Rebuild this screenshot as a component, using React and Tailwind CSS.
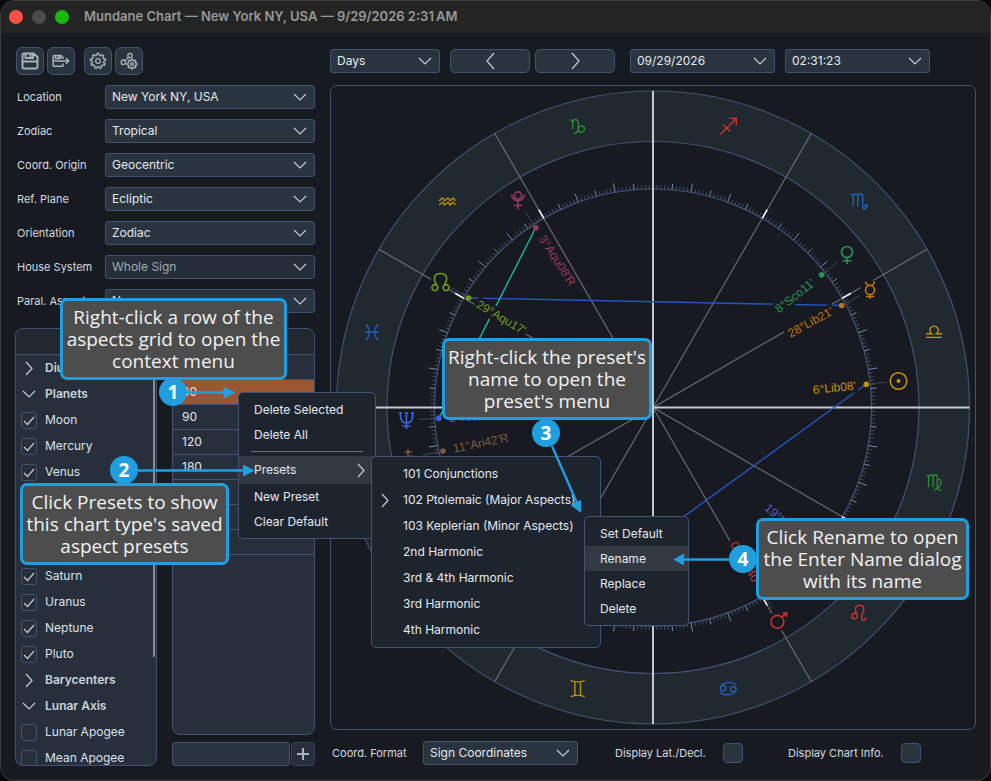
import React from "react";

const C = { x: 653, y: 407.5 };
const R_OUT = 316.5;
const R_MID = 266;
const R_IN = 218.5;

function polar(r, deg) {
  const a = (deg * Math.PI) / 180;
  return [C.x + r * Math.cos(a), C.y - r * Math.sin(a)];
}

function Chevron({ className = "", dir = "down" }) {
  const d =
    dir === "down" ? "M1 1 L7 7 L13 1" : dir === "right" ? "M1 1 L7 7.5 L1 14" : "M8 1 L1 9 L8 17";
  const box = dir === "down" ? [14, 8] : dir === "right" ? [8, 15] : [9, 18];
  return (
    <svg width={box[0]} height={box[1]} viewBox={`0 0 ${box[0]} ${box[1]}`} fill="none" stroke="#c3cad1" strokeWidth="1.2" className={className} aria-hidden="true">
      <path d={d} />
    </svg>
  );
}

function Dropdown({ id, label, value, className = "", muted = false }) {
  return (
    <div className={`relative h-6 ${className}`}>
      <select
        id={id}
        aria-label={label}
        className={`block h-6 w-full appearance-none rounded-[3px] border border-[#435173] pl-1.5 pr-8 text-[12px] outline-none ${muted ? "bg-[#252d38] text-[#a3abb2]" : "bg-[#29343f] text-[#e4e9ed]"}`}
      >
        <option>{value}</option>
      </select>
      <Chevron className="pointer-events-none absolute right-2 top-2" />
    </div>
  );
}

const SETTINGS = [
  ["Location", "New York NY, USA"],
  ["Zodiac", "Tropical"],
  ["Coord. Origin", "Geocentric"],
  ["Ref. Plane", "Ecliptic"],
  ["Orientation", "Zodiac"],
  ["House System", "Whole Sign", true],
  ["Paral. Aspects", "None"],
];

const BODIES = [
  { name: "Diurnal Arc", group: "closed" },
  { name: "Planets", group: "open" },
  { name: "Moon", on: true },
  { name: "Mercury", on: true },
  { name: "Venus", on: true },
  { name: "Earth", on: true },
  { name: "Mars", on: true },
  { name: "Jupiter", on: true },
  { name: "Saturn", on: true },
  { name: "Uranus", on: true },
  { name: "Neptune", on: true },
  { name: "Pluto", on: true },
  { name: "Barycenters", group: "closed" },
  { name: "Lunar Axis", group: "open" },
  { name: "Lunar Apogee", on: false },
  { name: "Mean Apogee", on: false },
];

const ASPECTS = ["0", "60", "90", "120", "180", "", "", ""];

function BodyRow({ item }) {
  if (item.group) {
    return (
      <button className="flex h-[26px] w-full shrink-0 items-center whitespace-nowrap text-left text-[12px] font-semibold text-[#cdd4da]">
        <span className="flex w-[29px] shrink-0 justify-center pr-1">
          {item.group === "open" ? <Chevron /> : <Chevron dir="right" />}
        </span>
        {item.name}
      </button>
    );
  }
  return (
    <label className="flex h-[26px] shrink-0 items-center gap-2 whitespace-nowrap pl-[5px] text-[12px] text-[#dbe1e6]">
      <span className="relative h-[17px] w-4">
        <input type="checkbox" defaultChecked={item.on} className="peer block h-[17px] w-4 appearance-none rounded-[3px] border border-[#435173] bg-[#262f3b]" />
        <svg viewBox="0 0 16 17" className="pointer-events-none absolute inset-0 hidden h-[17px] w-4 peer-checked:block" fill="none" stroke="#c3cad1" strokeWidth="1.2" aria-hidden="true">
          <path d="M3 9 L6.5 12.5 L13 5" />
        </svg>
      </span>
      {item.name}
    </label>
  );
}

function ToolButton({ label, children, className = "" }) {
  return (
    <button aria-label={label} className={`flex size-7 items-center justify-center rounded-[6px] border border-[#435173] bg-[#29343f] ${className}`}>
      {children}
    </button>
  );
}

function gearPath(cx, cy, r, inner, teeth) {
  const pts = [];
  for (let i = 0; i < teeth; i++) {
    const step = (2 * Math.PI) / teeth;
    [
      [-0.32, inner],
      [-0.2, r],
      [0.2, r],
      [0.32, inner],
    ].forEach(([o, rad]) => {
      const a = (i + o) * step - Math.PI / 2;
      pts.push(`${(cx + rad * Math.cos(a)).toFixed(2)} ${(cy + rad * Math.sin(a)).toFixed(2)}`);
    });
  }
  return `M${pts.join(" L")} Z`;
}

const SIGN_PATHS = {
  capricorn: "M-8 -6 Q-5 -7.5 -5 -3 V2.5 M-5 -3 Q-4.5 -7 -2 -7 Q.5 -6.5 .5 -3 V3 Q0 7 -4 7 M.5 3 A3.2 3.2 0 1 0 3 -.5 Q.8 0 .5 3",
  aquarius:
    "M-8 -.8 L-5.5 -3.5 Q-4.2 -4 -3.6 -2.2 Q-3 -.4 -2 -1.5 L0 -3.5 Q1.3 -4 2 -2.2 Q2.6 -.4 3.5 -1.5 L5.3 -3.5 Q7 -4 7.8 -.8 M-8 3.4 L-5.5 .8 Q-4.2 .2 -3.6 2 Q-3 3.8 -2 2.8 L0 .8 Q1.3 .2 2 2 Q2.6 3.8 3.5 2.8 L5.3 .8 Q7 .2 7.8 3.4",
  pisces: "M-6 -8 Q1 0 -6 8 M6 -8 Q-1 0 6 8 M-6.5 0 H6.5",
  sagittarius: "M-8 8 L8 -8 M1 -8 H8 V-1 M-5.5 -2 L2 5",
  scorpio: "M-8 -7 Q-6 -8 -5.5 -5 V4.5 M-5.5 -5 Q-5 -8 -3 -8 Q-1 -8 -1 -5 V4.5 M-1 -5 Q-.5 -8 1.5 -8 Q4 -8 4 -5 V5 Q4.5 9 7.5 6 V3 M5.5 4.8 L7.6 2.6 L9 4.8",
  libra: "M-8 1.5 H-2.5 A4.2 4.2 0 1 1 2.5 1.5 H8 M-8 5.2 H8",
  virgo: "M-7.5 -7 Q-6 -8 -5.5 -5 V4.5 M-5.5 -5 Q-5 -8 -3 -8 Q-1 -8 -1 -5 V4.5 M-1 -5 Q-.5 -8 1.2 -8 Q3.2 -8 3.2 -5 V4 Q3.5 7 7 7.5 M3.2 -2.5 Q7 -5 7 -1 Q7 4 0 7.5",
  leo: "M-1.8 1 C-4 -2 -4.5 -8 1 -8 C6 -8 5.5 -3 4 0 C2.5 3 2 7 4.7 7 Q7 7 7 4.2 M-1.4 2.8 A2.8 2.8 0 1 1 -7 2.8 A2.8 2.8 0 1 1 -1.4 2.8",
  cancer: "M-7.6 -1 C-6 -7 4 -7.5 8 -3.8 M7.6 1 C6 7 -4 7.5 -8 3.8 M-2.4 -.4 A2.7 2.7 0 1 1 -7.8 -.4 A2.7 2.7 0 1 1 -2.4 -.4 M7.8 .6 A2.7 2.7 0 1 1 2.4 .6 A2.7 2.7 0 1 1 7.8 .6",
  gemini: "M-7 -8 Q0 -5.5 7 -8 M-7 8 Q0 5.5 7 8 M-2.8 -6.8 V6.8 M2.8 -6.8 V6.8",
};

const SIGNS = [
  ["libra", 15, "#bd920f"],
  ["scorpio", 45, "#1f60b8"],
  ["sagittarius", 75, "#d0322d"],
  ["capricorn", 105, "#2c8a31"],
  ["aquarius", 135, "#bd920f"],
  ["pisces", 165, "#1f60b8"],
  ["gemini", 255, "#bd920f"],
  ["cancer", 285, "#1f60b8"],
  ["leo", 315, "#d0322d"],
  ["virgo", 345, "#2c8a31"],
];

const PLANETS = [
  { deg: 6.2, color: "#c2920f", text: "6°Lib08'", w: 45, at: [898.5, 381], d: "M8.3 0 A8.3 8.3 0 1 1 -8.3 0 A8.3 8.3 0 1 1 8.3 0", dot: true },
  { deg: 28.4, color: "#c1740f", text: "28°Lib21'", w: 51, at: [870, 290], d: "M-4.3 -8.5 Q-4 -4.5 0 -4.5 Q4 -4.5 4.3 -8.5 M4.5 0 A4.5 4.5 0 1 1 -4.5 0 A4.5 4.5 0 1 1 4.5 0 M0 4.5 V9 M-4 6.5 H4" },
  { deg: 38.2, color: "#259455", text: "8°Sco11'", w: 47, at: [847, 255], d: "M5.5 -3 A5.5 5.5 0 1 1 -5.5 -3 A5.5 5.5 0 1 1 5.5 -3 M0 2.5 V9 M-4.3 5.8 H4.3" },
  { deg: 123.1, color: "#96385f", text: "3°Aqu08'R", w: 57, at: [518, 200.5], d: "M3.6 -5 A3.6 3.6 0 1 1 -3.6 -5 A3.6 3.6 0 1 1 3.6 -5 M-6.3 -6 A6.3 6.3 0 0 0 6.3 -6 M0 1 V9 M-4.3 5 H4.3" },
  { deg: 149.3, color: "#6f9a1d", text: "29°Aqu17'", w: 55, at: [440.5, 282], d: "M-3.4 3.6 C-8 -3 -6.5 -8.5 0 -8.5 C6.5 -8.5 8 -3 3.4 3.6 M-2.6 5.6 A3 3 0 1 1 -8.6 5.6 A3 3 0 1 1 -2.6 5.6 M8.6 5.6 A3 3 0 1 1 2.6 5.6 A3 3 0 1 1 8.6 5.6" },
  { deg: 182.9, color: "#3c63e0", text: "2°Ari54'R", w: 50, at: [406.5, 420], d: "M-6 -8 V-4 Q-6 3 0 3 Q6 3 6 -4 V-8 M0 -8 V9 M-4 6 H4 M-7.5 -7 H-4.5 M4.5 -7 H7.5 M-1.5 -7 H1.5" },
  { deg: 191.7, color: "#7a5a45", text: "11°Ari42'R", w: 57, at: [409, 458], d: "M-1 -9 V6 M-4 -6 H3 M-1 0 Q3 -4 5 0 Q5 4 2 8" },
  { deg: 300.7, color: "#c7322f", text: "0°Leo40'", w: 48, at: [778, 621], d: "M5.8 .8 A6.4 6.4 0 1 1 -7 .8 A6.4 6.4 0 1 1 5.8 .8 M3.8 -3.8 L8.5 -8 M4.5 -7.5 L8.8 -8.3 L8.2 -4.2" },
  { deg: 319, color: "#6d52c4", text: "19°Leo23'", w: 54, at: [839, 569], d: "M-5 -7 Q0 -6 0 -1 Q-1 3 -6 3 H6 M3 -3 V8" },
];

function Wheel() {
  const ticks = [];
  for (let i = 0; i < 360; i++) {
    if (i % 30 === 0) continue;
    const len = i % 10 === 0 ? 9 : i % 5 === 0 ? 6 : 4;
    const [x1, y1] = polar(R_IN, i);
    const [x2, y2] = polar(R_IN + len, i);
    ticks.push(<line key={i} x1={x1} y1={y1} x2={x2} y2={y2} stroke={i % 5 === 0 ? "#7787ab" : "#414f6c"} strokeWidth="1" />);
  }
  const spokes = [30, 60, 120, 150, 210, 240, 300, 330];
  return (
    <svg viewBox="331 86 644 643" className="block w-full" role="img" aria-label="Astrological chart wheel">
      <circle cx={C.x} cy={C.y} r={(R_OUT + R_MID) / 2} fill="none" stroke="#202830" strokeWidth={R_OUT - R_MID} />
      {[R_OUT, R_MID, R_IN].map((r) => (
        <circle key={r} cx={C.x} cy={C.y} r={r} fill="none" stroke="#435173" strokeWidth="1.2" />
      ))}
      {ticks}
      {spokes.map((d) => {
        const [x, y] = polar(R_OUT, d);
        const [a, b] = polar(R_IN, d);
        const [e, f] = polar(R_IN + 10, d);
        return (
          <g key={d}>
            <line x1={C.x} y1={C.y} x2={x} y2={y} stroke="#6c717b" strokeWidth="1.1" />
            <line x1={a} y1={b} x2={e} y2={f} stroke="#f1f3f5" strokeWidth="1.6" />
          </g>
        );
      })}
      <g stroke="#c3c9cf" strokeWidth="2">
        <line x1={C.x} y1={C.y - R_OUT} x2={C.x} y2={C.y + R_OUT} />
        <line x1={C.x - R_OUT} y1={C.y} x2={C.x + R_OUT} y2={C.y} />
      </g>
      <g strokeWidth="1.4">
        <line x1="468" y1="298" x2="841.5" y2="305.5" stroke="#2454c6" />
        <line x1="866" y1="384.3" x2="566" y2="602" stroke="#2454c6" />
        <line x1="535.6" y1="228" x2="439" y2="418" stroke="#20b3a2" />
      </g>
      {SIGNS.map(([name, deg, color]) => {
        const [x, y] = polar(291, deg);
        return <path key={name} d={SIGN_PATHS[name]} transform={`translate(${x} ${y})`} fill="none" stroke={color} strokeWidth="1.4" />;
      })}
      {PLANETS.map((p) => {
        const left = p.deg > 90 && p.deg < 270;
        const [dx, dy] = polar(214.5, p.deg);
        const [tx, ty] = polar(204, p.deg);
        const [lx, ly] = polar(R_IN, p.deg);
        const [mx, my] = polar(235, p.deg);
        const rot = left ? 180 - p.deg : -p.deg;
        return (
          <g key={p.text}>
            <line x1={lx} y1={ly} x2={mx} y2={my} stroke="#3a465c" />
            <circle cx={p.at[0]} cy={p.at[1]} r="10" fill="#181a21" />
            <circle cx={dx} cy={dy} r="2.8" fill={p.color} />
            <g transform={`translate(${tx} ${ty}) rotate(${rot})`}>
              <rect x={left ? -2 : -p.w - 2} y="-7" width={p.w + 4} height="14" fill="#181a21" />
              <text y="4" textAnchor={left ? "start" : "end"} fill={p.color} className="font-['Liberation_Sans',sans-serif] text-[12px]">
                {p.text}
              </text>
            </g>
            <path d={p.d} transform={`translate(${p.at[0]} ${p.at[1]})`} fill="none" stroke={p.color} strokeWidth="1.6" />
            {p.dot && <circle cx={p.at[0]} cy={p.at[1]} r="2" fill={p.color} />}
          </g>
        );
      })}
    </svg>
  );
}

function Menu({ label, className, children }) {
  return (
    <div role="menu" aria-label={label} className={`absolute flex flex-col rounded-[5px] border border-[#435173] bg-[#1e242d] text-[12px] text-[#e4e9ed] ${className}`}>
      {children}
    </div>
  );
}

function MenuItem({ className, active = false, children }) {
  return (
    <button role="menuitem" className={`relative flex w-full items-center whitespace-nowrap text-left ${active ? "bg-[#333942]" : ""} ${className}`}>
      {children}
    </button>
  );
}

function Callout({ className, lines }) {
  return (
    <div className={`absolute flex h-[82px] flex-col items-center justify-center rounded-[7px] border-[3px] border-[#1f9fe0] bg-[#4d4d4d] text-center font-['Open_Sans','Noto_Sans',sans-serif] text-[19px] leading-[22px] text-[#f2f2f2] ${className}`}>
      {lines.map((l) => (
        <span key={l} className="whitespace-nowrap">
          {l}
        </span>
      ))}
    </div>
  );
}

function Badge({ className, n }) {
  return (
    <span className={`absolute flex size-7 items-center justify-center rounded-full bg-[#1f9fe0] font-['Open_Sans','Noto_Sans',sans-serif] text-[19px] font-bold text-white ${className}`}>
      {n}
    </span>
  );
}

function Annotations() {
  return (
    <>
      <svg viewBox="0 0 991 781" className="pointer-events-none absolute left-0 top-0 h-[781px] w-[991px]" fill="#1f9fe0" stroke="none" aria-hidden="true">
        <g stroke="#1f9fe0" strokeWidth="2.4">
          <path d="M186 392.5 H226 M138 470.5 H246 M552 446 L577.5 504 M729 559.5 H682" />
        </g>
        <path d="M223.5 386.5 L235.5 392.5 L223.5 398.5 Z M243 464.5 L255 470.5 L243 476.5 Z M673.5 559.5 L684 553.5 V565.5 Z M570.5 505 L581 513 L581 500 Z" />
      </svg>
      <Callout className="left-[60px] top-[298px] w-[227px]" lines={["Right-click a row of the", "aspects grid to open the", "context menu"]} />
      <Callout className="left-[20px] top-[483px] w-[209px]" lines={["Click Presets to show", "this chart type's saved", "aspect presets"]} />
      <Callout className="left-[442px] top-[338px] w-[210px]" lines={["Right-click the preset's", "name to open the", "preset's menu"]} />
      <Callout className="left-[756px] top-[518px] w-[213px]" lines={["Click Rename to open", "the Enter Name dialog", "with its name"]} />
      <Badge className="left-[159px] top-[378px]" n="1" />
      <Badge className="left-[110px] top-[456px]" n="2" />
      <Badge className="left-[532px] top-[419px]" n="3" />
      <Badge className="left-[729px] top-[545px]" n="4" />
    </>
  );
}

const PRESETS = [
  "101 Conjunctions",
  "102 Ptolemaic (Major Aspects)",
  "103 Keplerian (Minor Aspects)",
  "2nd Harmonic",
  "3rd & 4th Harmonic",
  "3rd Harmonic",
  "4th Harmonic",
];

function Sidebar() {
  return (
    <aside className="flex w-[300px] shrink-0 flex-col">
      <div className="mb-2.5 flex gap-[3px] pl-px">
        <ToolButton label="Save">
          <svg width="18" height="18" viewBox="0 0 18 18" fill="none" stroke="#a9b3bb" strokeWidth="1.9" aria-hidden="true">
            <path d="M3 1.5 H12.5 L16.5 5 V15 Q16.5 16.5 15 16.5 H3 Q1.5 16.5 1.5 15 V3 Q1.5 1.5 3 1.5 Z M4.5 1.5 V6 H12 V1.5 M1.5 9.5 H16.5 M9.5 2.5 V5" />
          </svg>
        </ToolButton>
        <ToolButton label="Save as">
          <svg width="18" height="14" viewBox="0 0 18 14" fill="none" stroke="#a9b3bb" strokeWidth="1.5" aria-hidden="true">
            <path d="M11 5 V3.5 L9 1.5 H2 Q1.2 1.5 1.2 2.3 V11.5 Q1.2 12.3 2 12.3 H10.2 Q11 12.3 11 11.5 V9.5 M3.5 1.5 V4.5 H8.5 V1.5 M1.2 7 H16.5 M14 4.3 L16.7 7 L14 9.7 M6.5 2 V4" />
          </svg>
        </ToolButton>
        <ToolButton label="Settings" className="ml-1.5">
          <svg width="18" height="18" viewBox="0 0 18 18" fill="none" stroke="#a9b3bb" strokeWidth="1.3" strokeLinejoin="round" aria-hidden="true">
            <path d={gearPath(9, 9, 7.6, 5.8, 9)} />
            <circle cx="9" cy="9" r="2.3" />
          </svg>
        </ToolButton>
        <ToolButton label="Aspect settings">
          <svg width="18" height="18" viewBox="0 0 18 18" fill="none" stroke="#a9b3bb" strokeWidth="1.3" strokeLinejoin="round" aria-hidden="true">
            <circle cx="10" cy="3.5" r="2.2" />
            <circle cx="3.4" cy="10.2" r="2.2" />
            <path d="M5 8.6 L8.5 5.1" />
            <path d={gearPath(12, 12, 4.8, 3.7, 8)} />
            <circle cx="12" cy="12" r="1.4" />
          </svg>
        </ToolButton>
      </div>
      <div className="flex flex-col gap-2.5">
        {SETTINGS.map(([label, value, muted]) => (
          <div key={label} className="flex items-center">
            <label htmlFor={label} className="w-[90px] pl-0.5 text-[11px] text-[#d3dae0]">
              {label}
            </label>
            <Dropdown id={label} value={value} muted={muted} className="flex-1" />
          </div>
        ))}
      </div>
      <div className="mt-[15px] flex h-[438px] gap-[15px]">
        <div className="flex w-[142px] shrink-0 flex-col overflow-hidden rounded-[8px] border border-[#435173] bg-[#262f3b]">
          <div className="h-[26px] shrink-0 border-b border-[#435173] bg-[#212830]" />
          <div className="flex min-h-0 flex-1 overflow-hidden">
            <div className="min-w-0 flex-1">
              {BODIES.map((b) => (
                <BodyRow key={b.name} item={b} />
              ))}
            </div>
            <div className="mr-px h-[302px] w-0.5 rounded-full bg-[#8d8f8f]" />
          </div>
        </div>
        <div className="flex min-w-0 flex-1 flex-col gap-[7px]">
          <div className="flex-1 overflow-hidden rounded-[8px] border border-[#435173] bg-[#262f3b]">
            <table className="w-full border-collapse text-[12px] text-[#e4e9ed]">
              <thead>
                <tr className="h-[25px] border-b border-[#435173] bg-[#212830]">
                  <th aria-label="Angle" />
                </tr>
              </thead>
              <tbody>
                {ASPECTS.map((a, i) => (
                  <tr key={i} className={`h-[25px] border-b border-[#435173] ${a === "60" ? "bg-[#9a5531]" : ""}`}>
                    <td className="p-0 pl-[9px]">{a}</td>
                  </tr>
                ))}
              </tbody>
            </table>
          </div>
          <div className="flex h-6 gap-px">
            <input aria-label="New aspect" className="h-6 w-full min-w-0 flex-1 rounded-[3px] border border-[#435173] bg-[#29343f] px-2 text-[12px] text-white outline-none" />
            <button aria-label="Add aspect" className="flex size-6 shrink-0 items-center justify-center rounded-[4px] border border-[#37435d] bg-[#262f3b]">
              <svg width="12" height="12" viewBox="0 0 12 12" stroke="#a9b3bb" strokeWidth="2" aria-hidden="true">
                <path d="M6 0 V12 M0 6 H12" />
              </svg>
            </button>
          </div>
        </div>
      </div>
    </aside>
  );
}

function ChartArea() {
  const box = "size-5 appearance-none rounded-[4px] border border-[#435173] bg-[#29343f]";
  return (
    <main className="flex min-w-0 flex-1 flex-col pt-0.5">
      <div className="mb-3 flex h-6">
        <Dropdown label="Step unit" value="Days" className="w-[110px]" />
        <button aria-label="Previous" className="ml-2.5 flex h-6 w-20 items-center justify-center rounded-[5px] border border-[#435173] bg-[#29343f]">
          <Chevron dir="left" />
        </button>
        <button aria-label="Next" className="ml-[5px] flex h-6 w-20 items-center justify-center rounded-[5px] border border-[#435173] bg-[#29343f]">
          <span className="rotate-180">
            <Chevron dir="left" />
          </span>
        </button>
        <Dropdown label="Date" value="09/29/2026" className="ml-[15px] w-[145px]" />
        <Dropdown label="Time" value="02:31:23" className="ml-2.5 w-[145px]" />
      </div>
      <div className="rounded-[7px] border border-[#435173]">
        <Wheel />
      </div>
      <div className="mt-[11px] flex items-center pl-0.5 text-[11px] text-[#d3dae0]">
        <label htmlFor="format" className="w-[91px]">
          Coord. Format
        </label>
        <Dropdown id="format" value="Sign Coordinates" className="w-[155px]" />
        <label className="ml-[37px] flex w-32 items-center justify-between">
          Display Lat./Decl.
          <input type="checkbox" className={box} />
        </label>
        <label className="ml-[45px] flex w-[133px] items-center justify-between">
          Display Chart Info.
          <input type="checkbox" className={box} />
        </label>
      </div>
    </main>
  );
}

export default function App() {
  return (
    <div className="relative min-h-screen overflow-hidden bg-[#08090b] font-['Inter',sans-serif]">
      <div className="min-h-screen overflow-hidden rounded-[14px] border border-[#3c3d3f] bg-[#181a21]">
        <header className="flex h-8 items-center bg-[#242424] pl-2">
          <div className="flex gap-[9px]">
            <button aria-label="Close" className="size-3.5 rounded-full bg-[#fb4f48]" />
            <button aria-label="Minimize" className="size-3.5 rounded-full bg-[#4b4b4b]" />
            <button aria-label="Zoom" className="size-3.5 rounded-full bg-[#17b80f]" />
          </div>
          <h1 className="ml-[15px] text-[13px] font-semibold text-[#989898]">Mundane Chart — New York NY, USA — 9/29/2026 2:31{"\u2009"}AM</h1>
        </header>
        <div className="flex gap-[15px] pb-3.5 pl-3.5 pr-3.5 pt-3.5">
          <Sidebar />
          <ChartArea />
        </div>
      </div>

      <Menu label="Aspects grid menu" className="left-[238px] top-[392px] h-[147px] w-[138px] pt-1">
        <MenuItem className="h-[25px] pl-[15px]">Delete Selected</MenuItem>
        <MenuItem className="h-[25px] pl-[15px]">Delete All</MenuItem>
        <hr className="mb-1 ml-3 mr-3 mt-1 border-[#6b6f76]" />
        <MenuItem active className="h-7 pl-[15px]">
          Presets
          <Chevron dir="right" className="absolute right-2.5 top-[7px]" />
        </MenuItem>
        <MenuItem className="h-[25px] pl-[15px]">New Preset</MenuItem>
        <MenuItem className="h-[25px] pl-[15px]">Clear Default</MenuItem>
      </Menu>
      <Menu label="Presets" className="left-[371px] top-[456px] h-[192px] w-[230px] pt-1">
        {PRESETS.map((p, i) => (
          <MenuItem key={p} className="h-[26px] pl-[31px]">
            {i === 1 && <Chevron dir="right" className="absolute left-[9px] top-[6px]" />}
            {p}
          </MenuItem>
        ))}
      </Menu>
      <Menu label="Preset menu" className="left-[584px] top-[516px] h-[110px] w-[105px] pt-1">
        <MenuItem className="h-[25px] pl-[15px]">Set Default</MenuItem>
        <MenuItem active className="h-[25px] pl-[15px]">Rename</MenuItem>
        <MenuItem className="h-[25px] pl-[15px]">Replace</MenuItem>
        <MenuItem className="h-[25px] pl-[15px]">Delete</MenuItem>
      </Menu>
      <Annotations />
    </div>
  );
}
